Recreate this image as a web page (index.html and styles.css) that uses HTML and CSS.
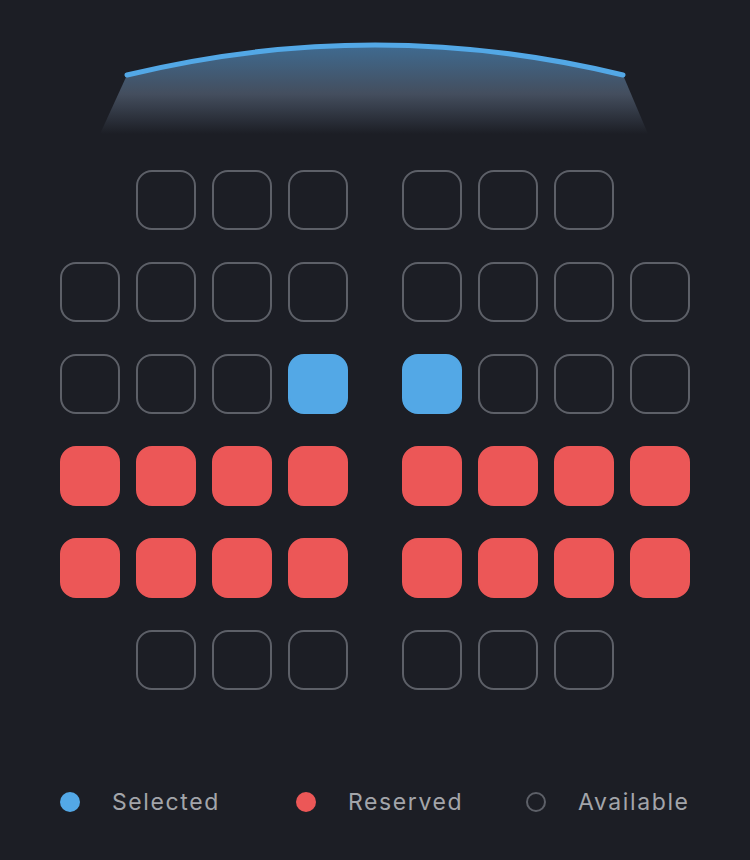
FILE: index.html
```html
<!DOCTYPE html>
<html>
<head>
<meta charset="utf-8">
<link rel="stylesheet" href="styles.css">
</head>
<body>
<main class="app">
  <div class="screen">
    <svg width="750" height="140" viewBox="0 0 750 140" xmlns="http://www.w3.org/2000/svg">
      <defs>
        <linearGradient id="glow" x1="0" y1="45" x2="0" y2="134" gradientUnits="userSpaceOnUse">
          <stop offset="0" stop-color="#3f6b91"/>
          <stop offset="0.55" stop-color="#444e5e"/>
          <stop offset="1" stop-color="#1c1e25"/>
        </linearGradient>
      </defs>
      <path d="M127 75 Q375 15 623 75 L648 134 L100 134 Z" fill="url(#glow)"/>
      <path d="M127 75 Q375 15 623 75" fill="none" stroke="#53a8e6" stroke-width="5" stroke-linecap="round"/>
    </svg>
  </div>
  <div class="seats">
    <span class="gap"></span><span class="seat"></span><span class="seat"></span><span class="seat"></span><span class="aisle"></span><span class="seat"></span><span class="seat"></span><span class="seat"></span><span class="gap"></span>

    <span class="seat"></span><span class="seat"></span><span class="seat"></span><span class="seat"></span><span class="aisle"></span><span class="seat"></span><span class="seat"></span><span class="seat"></span><span class="seat"></span>

    <span class="seat"></span><span class="seat"></span><span class="seat"></span><span class="seat selected"></span><span class="aisle"></span><span class="seat selected"></span><span class="seat"></span><span class="seat"></span><span class="seat"></span>

    <span class="seat reserved"></span><span class="seat reserved"></span><span class="seat reserved"></span><span class="seat reserved"></span><span class="aisle"></span><span class="seat reserved"></span><span class="seat reserved"></span><span class="seat reserved"></span><span class="seat reserved"></span>

    <span class="seat reserved"></span><span class="seat reserved"></span><span class="seat reserved"></span><span class="seat reserved"></span><span class="aisle"></span><span class="seat reserved"></span><span class="seat reserved"></span><span class="seat reserved"></span><span class="seat reserved"></span>

    <span class="gap"></span><span class="seat"></span><span class="seat"></span><span class="seat"></span><span class="aisle"></span><span class="seat"></span><span class="seat"></span><span class="seat"></span><span class="gap"></span>
  </div>
  <ul class="legend">
    <li class="legend-item"><span class="dot dot-selected"></span>Selected</li>
    <li class="legend-item"><span class="dot dot-reserved"></span>Reserved</li>
    <li class="legend-item"><span class="dot dot-available"></span>Available</li>
  </ul>
</main>
</body>
</html>
```
FILE: styles.css
```css
html, body {
  margin: 0;
  padding: 0;
  background: #1c1e25;
}
body {
  width: 750px;
  height: 860px;
  overflow: hidden;
  font-family: "Inter", "Noto Sans", sans-serif;
}
.app {
  display: flex;
  flex-direction: column;
}
.screen {
  height: 140px;
}
.screen svg {
  display: block;
}
.seats {
  margin-top: 30px;
  padding-left: 60px;
  display: grid;
  grid-template-columns: repeat(4, 60px) 22px repeat(4, 60px);
  grid-auto-rows: 60px;
  column-gap: 16px;
  row-gap: 32px;
}
.seat {
  box-sizing: border-box;
  width: 60px;
  height: 60px;
  border-radius: 16px;
  border: 2px solid #5d6068;
}
.seat.selected {
  background: #53a8e6;
  border-color: #53a8e6;
}
.seat.reserved {
  background: #ec5757;
  border-color: #ec5757;
}
.legend {
  list-style: none;
  margin: 102px 0 0 0;
  padding: 0 0 0 60px;
  display: grid;
  grid-template-columns: 236px 230px auto;
}
.legend-item {
  display: flex;
  align-items: center;
  gap: 32px;
  height: 20px;
  font-size: 23px;
  color: #a3a5aa;
  letter-spacing: 1.6px;
}
.dot {
  box-sizing: border-box;
  width: 20px;
  height: 20px;
  border-radius: 50%;
  flex: none;
}
.dot-selected { background: #53a8e6; }
.dot-reserved { background: #ec5757; }
.dot-available { border: 2px solid #5d6068; }
```
